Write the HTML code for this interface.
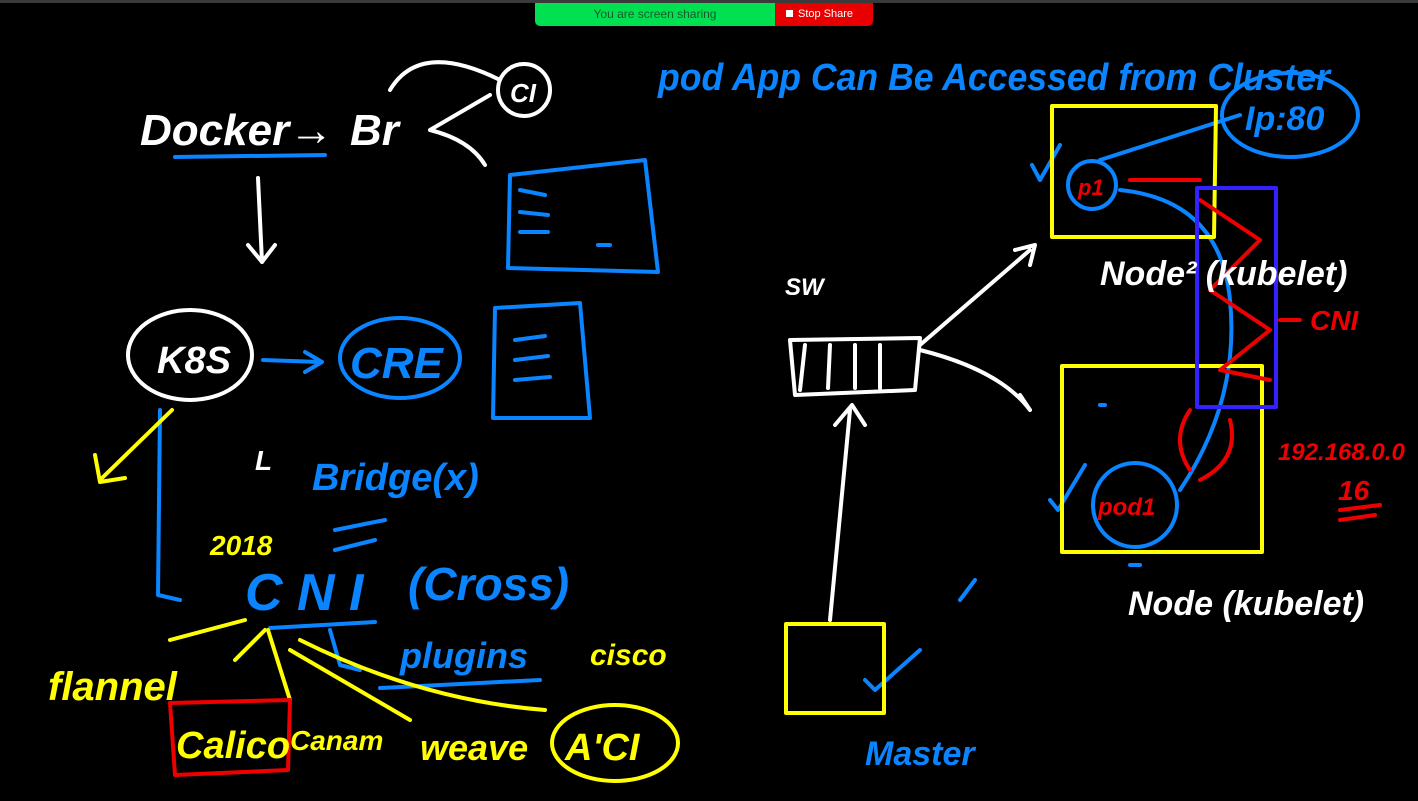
<!DOCTYPE html>
<html><head><meta charset="utf-8"><style>
body{margin:0;width:1418px;height:801px;background:#000;overflow:hidden;font-family:"Liberation Sans",sans-serif}
.bar{position:absolute;top:0;left:0;width:1418px;height:3px;background:#3a3a3a}
.g{position:absolute;left:535px;top:3px;width:240px;height:23px;background:#00e050;border-radius:0 0 0 5px;color:#1a5a2a;font-size:12px;line-height:23px;text-align:center}
.r{position:absolute;left:775px;top:3px;width:98px;height:23px;background:#e80000;border-radius:0 0 5px 0;color:#fff;font-size:11px;line-height:23px}
svg{position:absolute;left:0;top:0}
text{font-family:"Liberation Sans",sans-serif}
</style></head><body>
<div class="bar"></div>
<div class="g">You are screen sharing</div>
<div class="r"><span style="display:inline-block;width:7px;height:7px;background:#fff;margin:0 5px 0 11px"></span>Stop Share</div>
<svg width="1418" height="801" fill="none" stroke-linecap="round" stroke-linejoin="round">
<g stroke="#fff" stroke-width="4">
<path d="M390 90 Q420 40 500 80"/><circle cx="524" cy="90" r="26"/><path d="M430 130 L490 95 M430 130 Q470 140 485 165"/>
<path d="M258 178 L262 262 M248 245 L262 262 L275 245"/>
<ellipse cx="190" cy="355" rx="62" ry="45"/>
<path d="M790 340 L920 338 L915 390 L795 395 Z M805 345 L800 390 M830 345 L828 388 M855 345 L855 388 M880 345 L880 388"/>
<path d="M920 345 L1030 250 M1015 250 L1035 245 L1030 265"/>
<path d="M920 350 Q1000 370 1030 410 M1020 395 L1030 410"/>
<path d="M830 620 L850 410 M835 425 L852 405 L865 425"/>
</g>
<g stroke="#0a84ff" stroke-width="4">
<path d="M175 157 L325 155"/>
<path d="M510 175 L645 160 L658 272 L508 268 Z M520 190 L545 195 M520 212 L548 215 M520 232 L548 232 M598 245 L610 245"/>
<path d="M495 308 L580 303 L590 418 L493 418 Z M515 340 L545 336 M515 360 L548 356 M515 380 L550 377"/>
<ellipse cx="400" cy="358" rx="60" ry="40"/>
<path d="M263 360 L320 362 M305 352 L322 362 L305 372"/>
<path d="M160 410 L158 595 L180 600 M270 628 L375 622 M335 530 L385 520 M335 550 L375 540 M330 630 L340 665 L360 670 M380 688 L540 680"/>
<ellipse cx="1290" cy="115" rx="68" ry="42"/>
<path d="M1100 160 L1240 115"/>
<circle cx="1092" cy="185" r="24"/>
<circle cx="1135" cy="505" r="42"/>
<path d="M1120 190 Q1220 200 1230 300 Q1240 400 1180 490"/>
<path d="M1032 165 L1040 180 L1060 145 M1050 500 L1058 510 L1085 465 M865 680 L875 690 L920 650 M960 600 L975 580 M1100 405 L1105 405 M1130 565 L1140 565"/>
</g>
<g stroke="#ff0" stroke-width="4">
<path d="M172 410 L100 480 M95 455 L100 482 L125 478"/>
<path d="M170 640 L245 620 M235 660 L265 630 M268 630 L290 700 M290 650 L410 720 M300 640 Q420 700 545 710"/>
<path d="M1052 106 L1216 106 L1214 237 L1052 237 Z"/>
<path d="M1062 366 L1262 366 L1262 552 L1062 552 Z"/>
<path d="M786 624 L884 624 L884 713 L786 713 Z"/>
<ellipse cx="615" cy="743" rx="63" ry="38"/>
</g>
<g stroke="#e00" stroke-width="4">
<path d="M170 703 L290 700 L288 770 L175 775 Z"/>
<path d="M1130 180 L1200 180 M1200 200 L1260 240 L1210 290 L1270 330 L1220 370 L1270 380 M1190 410 Q1170 440 1190 470 M1230 420 Q1240 460 1200 480 M1280 320 L1300 320 M1340 510 L1380 505 M1340 520 L1375 515"/>
</g>
<path d="M1197 188 L1276 188 L1276 407 L1197 407 Z" stroke="#3322ff" stroke-width="4"/>
<g font-style="italic" font-weight="bold">
<text x="140" y="145" fill="#fff" font-size="44">Docker→</text>
<text x="350" y="145" fill="#fff" font-size="44">Br</text>
<text x="510" y="102" fill="#fff" font-size="26">CI</text>
<text x="157" y="373" fill="#fff" font-size="38">K8S</text>
<text x="350" y="378" fill="#0a84ff" font-size="44">CRE</text>
<text x="255" y="470" fill="#fff" font-size="28">L</text>
<text x="312" y="490" fill="#0a84ff" font-size="38">Bridge(x)</text>
<text x="210" y="555" fill="#ff0" font-size="28">2018</text>
<text x="245" y="610" fill="#0a84ff" font-size="52">C N I</text>
<text x="408" y="600" fill="#0a84ff" font-size="46">(Cross)</text>
<text x="400" y="668" fill="#0a84ff" font-size="36">plugins</text>
<text x="590" y="665" fill="#ff0" font-size="30">cisco</text>
<text x="48" y="700" fill="#ff0" font-size="40">flannel</text>
<text x="176" y="758" fill="#ff0" font-size="38">Calico</text>
<text x="290" y="750" fill="#ff0" font-size="28">Canam</text>
<text x="420" y="760" fill="#ff0" font-size="36">weave</text>
<text x="565" y="760" fill="#ff0" font-size="38">A'CI</text>
<text x="658" y="90" fill="#0a84ff" font-size="38" textLength="672" lengthAdjust="spacingAndGlyphs">pod App  Can  Be  Accessed from  Cluster</text>
<text x="1245" y="130" fill="#0a84ff" font-size="34">Ip:80</text>
<text x="1078" y="195" fill="#e00" font-size="22">p1</text>
<text x="1098" y="515" fill="#e00" font-size="24">pod1</text>
<text x="1100" y="285" fill="#fff" font-size="34">Node² (kubelet)</text>
<text x="1310" y="330" fill="#e00" font-size="28">CNI</text>
<text x="1278" y="460" fill="#e00" font-size="24">192.168.0.0</text>
<text x="1338" y="500" fill="#e00" font-size="28">16</text>
<text x="1128" y="615" fill="#fff" font-size="34">Node (kubelet)</text>
<text x="785" y="295" fill="#fff" font-size="24">SW</text>
<text x="865" y="765" fill="#0a84ff" font-size="34">Master</text>
</g>
</svg>
</body></html>
